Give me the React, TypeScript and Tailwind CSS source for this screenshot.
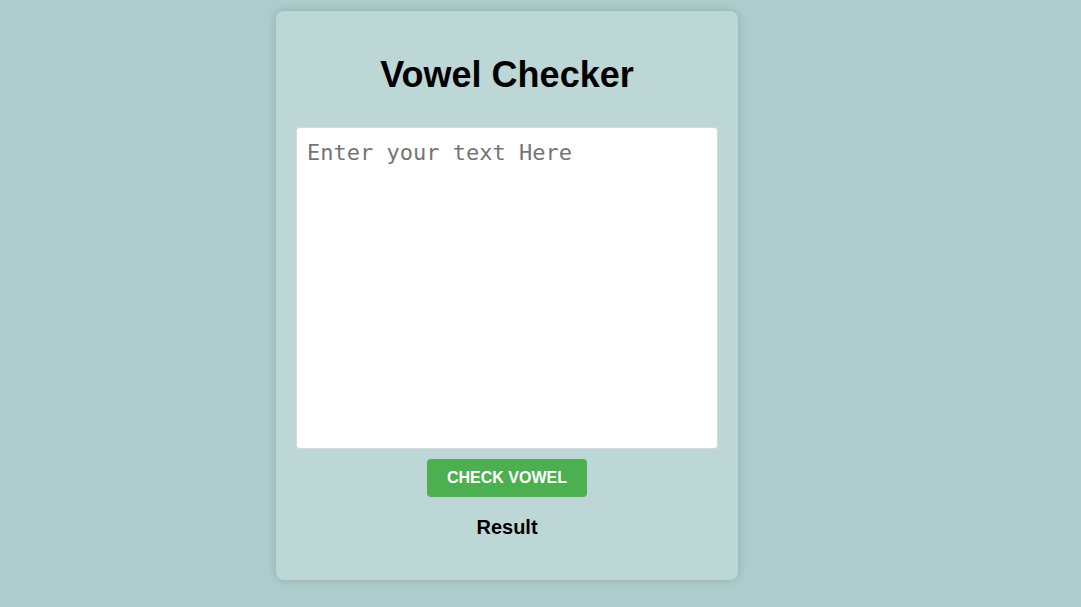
export default function App() {
  return (
    <div className="min-h-[607px] w-full bg-[#adcccc] pt-[11px]" style={{ fontFamily: '"Liberation Sans", Arial, sans-serif' }}>
      <div className="ml-[276px] flex w-[462px] flex-col items-center rounded-[8px] bg-[#bdd7d7] px-[20px] pt-[43px] pb-[41px] shadow-[0_0_10px_rgba(0,0,0,0.15)]">
        <h1 className="text-[36px] font-bold leading-[41px] text-black">Vowel Checker</h1>
        <textarea
          className="mt-[32px] h-[322px] w-[422px] resize-none rounded-[4px] border border-[#d8d8d8] bg-white px-[10px] pt-[12px] pb-[8px] text-[22px] leading-[26px] text-black outline-none placeholder:text-[#757575]"
          style={{ fontFamily: '"DejaVu Sans Mono", "Liberation Mono", monospace' }}
          placeholder="Enter your text Here"
        />
        <button className="mt-[10px] h-[38px] w-[160px] rounded-[4px] bg-[#4caf50] text-[16px] font-bold text-white">
          CHECK VOWEL
        </button>
        <div className="mt-[19px] text-[20px] font-bold leading-[23px] text-black">Result</div>
      </div>
    </div>
  );
}
